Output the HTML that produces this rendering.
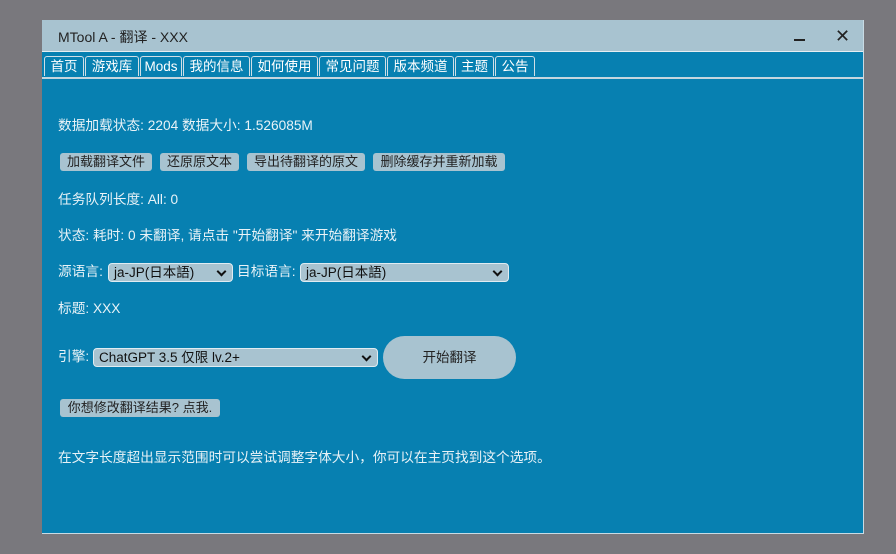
<!DOCTYPE html>
<html><head><meta charset="utf-8"><style>
body{margin:0;width:896px;height:554px;background:#79787d;position:relative;overflow:hidden;font-family:"Liberation Sans","Noto Sans CJK SC",sans-serif;font-size:13px}
#win{position:absolute;left:42px;top:20px;width:821px;height:513px;background:#0780b1;border-right:1px solid #c8dbe4;border-bottom:1px solid #c8dbe4}
#title{position:absolute;left:0;top:0;width:821px;height:31px;background:#a8c3d0;border-bottom:1px solid #e6eef2;color:#222;font-size:14px}
#title span{position:absolute;left:16px;top:7px}
.ab{position:absolute;color:#222}
#tabs{position:absolute;left:0;top:36px;height:21px;width:821px;border-bottom:2px solid #c4d6df}
.tab{position:absolute;top:0;height:20px;border:1px solid #d0dfe6;border-bottom:none;border-radius:3px 3px 0 0;color:#fff;font-size:13.5px;line-height:20px;text-align:center;box-sizing:border-box}
.t{position:absolute;left:16px;color:#e8f2f7;white-space:nowrap;font-size:13.7px;line-height:16px}
.btn{position:absolute;top:133px;height:18px;background:#a8c3d0;border-radius:3px;color:#222;line-height:18px;text-align:center;font-size:13px}
.sel{position:absolute;height:19px;background:#a8c3d0;border:1px solid #e0ecf2;border-radius:4px;color:#111;line-height:17px;padding-left:5px;box-sizing:border-box;font-size:13.5px}
.sel:after{content:"";position:absolute;right:7px;top:4px;width:5px;height:5px;border-right:2px solid #111;border-bottom:2px solid #111;transform:rotate(45deg)}
</style></head><body>
<div id="win">
<div id="title"><span>MTool A - 翻译 - XXX</span>
<div class="ab" style="left:752px;top:19px;width:11px;height:1.5px;background:#222"></div>
<div class="ab" style="left:793px;top:6px;font-size:18px">✕</div></div>
<div id="tabs">
<div class="tab" style="left:2px;width:40px">首页</div>
<div class="tab" style="left:43px;width:54px">游戏库</div>
<div class="tab" style="left:98px;width:42px">Mods</div>
<div class="tab" style="left:141px;width:67px">我的信息</div>
<div class="tab" style="left:209px;width:67px">如何使用</div>
<div class="tab" style="left:277px;width:67px">常见问题</div>
<div class="tab" style="left:345px;width:67px">版本频道</div>
<div class="tab" style="left:413px;width:39px">主题</div>
<div class="tab" style="left:453px;width:40px">公告</div>
</div>
<div class="t" style="top:98px">数据加载状态: 2204 数据大小: 1.526085M</div>
<div class="btn" style="left:18px;width:92px">加载翻译文件</div>
<div class="btn" style="left:118px;width:79px">还原原文本</div>
<div class="btn" style="left:205px;width:118px">导出待翻译的原文</div>
<div class="btn" style="left:331px;width:132px">删除缓存并重新加载</div>
<div class="t" style="top:172px">任务队列长度: All: 0</div>
<div class="t" style="top:208px">状态: 耗时: 0 未翻译, 请点击 "开始翻译" 来开始翻译游戏</div>
<div class="t" style="top:244px">源语言:</div>
<div class="sel" style="left:66px;top:243px;width:125px">ja-JP(日本語)</div>
<div class="t" style="left:195px;top:244px">目标语言:</div>
<div class="sel" style="left:258px;top:243px;width:209px">ja-JP(日本語)</div>
<div class="t" style="top:281px">标题: XXX</div>
<div class="t" style="top:329px">引擎:</div>
<div class="sel" style="left:51px;top:328px;width:285px">ChatGPT 3.5 仅限 lv.2+</div>
<div class="ab" style="left:341px;top:316px;width:133px;height:43px;background:#a8c3d0;border-radius:22px;line-height:43px;text-align:center;color:#222;font-size:13.5px">开始翻译</div>
<div class="btn" style="left:18px;top:379px;width:160px">你想修改翻译结果? 点我.</div>
<div class="t" style="top:430px">在文字长度超出显示范围时可以尝试调整字体大小，你可以在主页找到这个选项。</div>
</div>
</body></html>
